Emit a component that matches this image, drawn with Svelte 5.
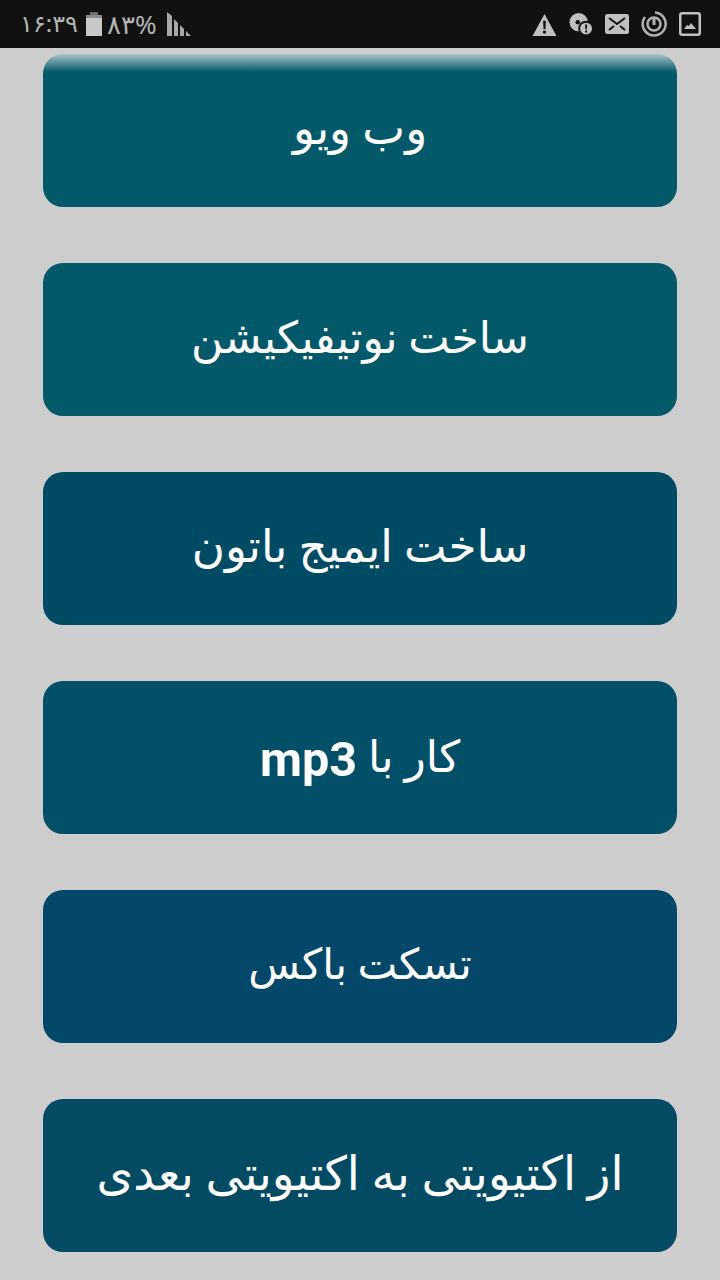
<script>
  const items = [
    { t: 'وب ویو', c: 'c1 s1' },
    { t: 'ساخت نوتیفیکیشن', c: 'c1 s2' },
    { t: 'ساخت ایمیج باتون', c: 'c2 s3' },
    { t: 'کار با ', en: 'mp3', c: 'c3 s2' },
    { t: 'تسکت باکس', c: 'c4 s5' },
    { t: 'از اکتیویتی به اکتیویتی بعدی', c: 'c5 s6' }
  ];
</script>

<div class="page">
  <header class="status">
    <div class="left">
      <span class="time">۱۶:۳۹</span>
      <svg class="batt" width="16" height="24" viewBox="0 0 16 24"><path d="M4 0h8v3H4z" fill="#6e6e6e"/><path d="M0 3h16v3H0z" fill="#8a8a8a"/><path d="M0 6h16v18H0z" fill="#c8c8c8"/></svg>
      <span class="pct">۸۳%</span>
      <svg class="sig" width="24" height="24" viewBox="0 0 24 24"><path d="M0 0l5 4v20H0zM7 7l4 4v13H7zM13 13l4 4v7h-4zM19 19l5 5h-5z" fill="#a8a8a8"/></svg>
    </div>
    <div class="right">
      <svg width="25" height="23" viewBox="0 0 26 24"><path d="M13 1 25.500 24H.5z" fill="#c0c0c0"/><path d="M11.500 8h3l-.5 9h-2zM11.500 18.500h3v3h-3z" fill="#111"/></svg>
      <svg width="24" height="22" viewBox="0 0 26 24"><circle cx="10.500" cy="10" r="10" fill="#c0c0c0"/><circle cx="9.500" cy="10" r="2.500" fill="#111"/><circle cx="18.500" cy="17" r="7.500" fill="#c0c0c0" stroke="#111" stroke-width="2"/><path d="M17.500 12.500h2.200l-.3 5.500h-1.600zM17.500 19h2.200v2.200h-2.200z" fill="#111"/></svg>
      <svg width="24" height="20" viewBox="0 0 24 20"><rect width="24" height="20" rx="2.500" fill="#c0c0c0"/><path d="M4 4l8 6 8-6M4 16l5-4M20 16l-5-4" fill="none" stroke="#111" stroke-width="2"/></svg>
      <svg width="26" height="26" viewBox="0 0 26 26"><path d="M14 1.500A11.500 11.500 0 1 1 4 6" fill="none" stroke="#b0b0b0" stroke-width="2.500"/><circle cx="13" cy="13" r="6.500" fill="none" stroke="#b0b0b0" stroke-width="2.500"/><path d="M13 6v8" stroke="#b0b0b0" stroke-width="3"/></svg>
      <svg width="22" height="24" viewBox="0 0 22 24"><rect x="1.250" y="1.250" width="19.500" height="21.500" rx="2" fill="none" stroke="#c0c0c0" stroke-width="2.500"/><path d="M4.500 5h13v14h-13z" fill="#111"/><path d="M5 17l3-4 2 1 2-3 5 6z" fill="#c0c0c0"/></svg>
    </div>
  </header>

  <main class="list">
    {#each items as item, i}
      <button class="btn {item.c}" class:first={i === 0}><span class="label">{item.t}{#if item.en}<b>{item.en}</b>{/if}</span></button>
    {/each}
  </main>
</div>

<style>
  :global(body) { margin: 0; background: #cdcdcd; }
  .page { width: 720px; height: 1280px; background: #cdcdcd; overflow: hidden; }
  .status {
    height: 48px; background: #111; display: flex; justify-content: space-between;
    align-items: center; padding: 0 19px 0 20px; box-sizing: border-box;
  }
  .left, .right { display: flex; align-items: center; }
  .left { color: #b4b4b4; font-family: "Noto Sans", "DejaVu Sans", sans-serif; font-size: 25px; }
  .time { width: 55px; margin-right: 11px; margin-top: -4px; font-size: 24px; white-space: nowrap; }
  .batt { margin: 0 5px 0 0; }
  .pct { width: 48px; margin-right: 12px; font-size: 26px; white-space: nowrap; }
  .right { gap: 12px; }
  .list { display: flex; flex-direction: column; gap: 56px; padding: 6px 43px 0; }
  .btn {
    height: 153px; border: 0; border-radius: 20px; color: #fff;
    font-family: "Roboto", "Noto Sans", "DejaVu Sans", sans-serif; font-size: 44px;
    direction: rtl; padding: 0;
  }
  .s1 { font-size: 45.5px; }
  .s2 { font-size: 44px; }
  .s3 { font-size: 45.3px; }
  .s5 { font-size: 42.3px; }
  .s6 { font-size: 47px; }
  .label { position: relative; top: -2px; }
  .btn b { position: relative; top: 4px; font-weight: 700; font-size: 48.500px; }
  .c1 { background: #03596a; }
  .c2 { background: #004b64; }
  .c3 { background: #024f68; }
  .c4 { background: #034868; }
  .c5 { background: #034b62; }
  .first { background: linear-gradient(#a9c3c9 0, #03596a 18px); }
</style>
